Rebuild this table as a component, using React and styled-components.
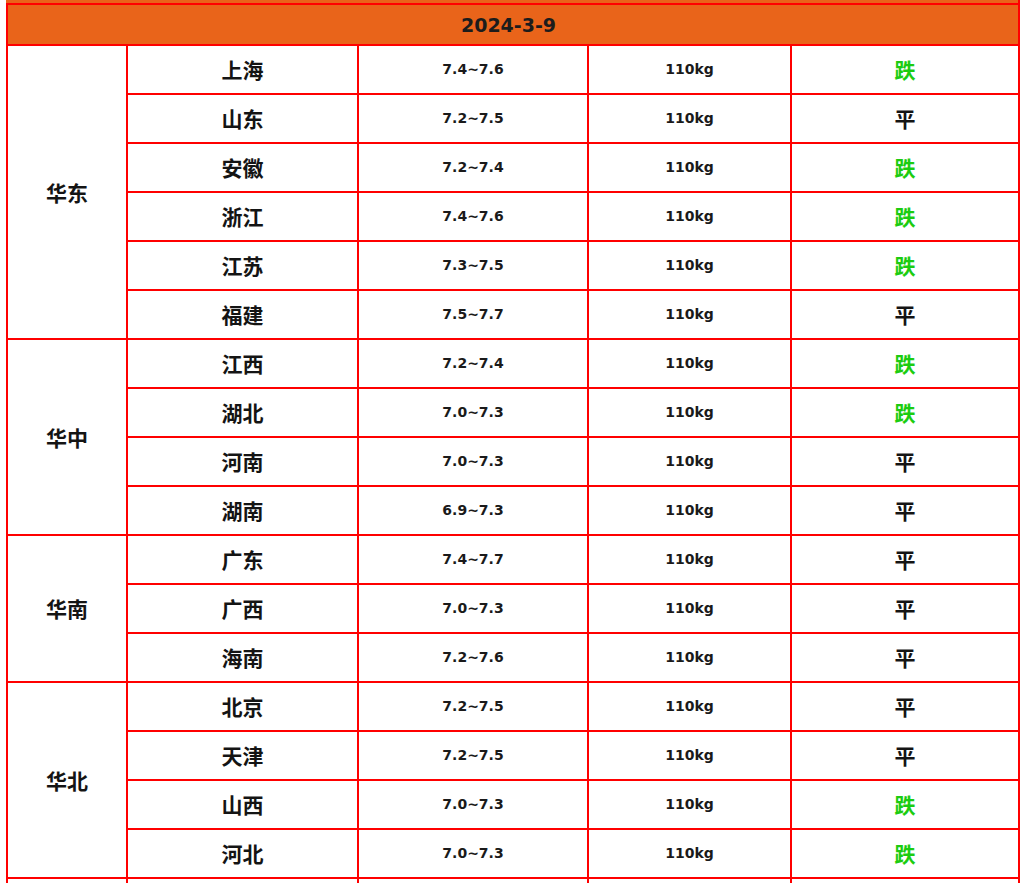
import React from "react";
import styled, { createGlobalStyle } from "styled-components";

const Global = createGlobalStyle`
  html, body { margin: 0; padding: 0; background: #fff; overflow: hidden; }
  body { font-family: "Noto Sans CJK SC", "DejaVu Sans", sans-serif; }
`;

const Page = styled.div`
  width: 1029px;
  height: 883px;
  overflow: hidden;
  background: #fff;
`;

const TopEdge = styled.div`
  width: 1012px;
  height: 3px;
  margin-left: 6px;
  background: #e9641a;
  border-right: 2px solid #ff0000;
`;

const Table = styled.div`
  margin-left: 6px;
  width: 1014px;
  box-sizing: border-box;
  display: grid;
  grid-template-columns: 118px 229px 228px 201px 226px;
  grid-template-rows: 39px;
  grid-auto-rows: 47px;
  gap: 2px;
  padding: 2px;
  background: #ff0000;
`;

const Header = styled.div`
  grid-column: 1 / -1;
  background: #e9641a;
  display: flex;
  align-items: center;
  justify-content: center;
  padding-right: 9px;
  font-family: "DejaVu Sans", sans-serif;
  font-weight: bold;
  font-size: 19px;
  color: #1c1c1c;
`;

const Cell = styled.div`
  background: #fff;
  display: flex;
  align-items: center;
  justify-content: center;
  padding-bottom: 1px;
  color: #141414;
`;

const RegionCell = styled(Cell)`
  grid-row: span ${(p) => p.$span};
  font-weight: bold;
  font-size: 21px;
  font-family: "Noto Sans CJK SC", sans-serif;
`;

const NameCell = styled(Cell)`
  font-weight: bold;
  font-size: 21px;
  font-family: "Noto Sans CJK SC", sans-serif;
`;

const NumCell = styled(Cell)`
  font-family: "DejaVu Sans", sans-serif;
  font-weight: bold;
  font-size: 14px;
  color: #1a1a1a;
`;

const TrendCell = styled(Cell)`
  font-weight: bold;
  font-size: 21px;
  font-family: "Noto Sans CJK SC", sans-serif;
  color: ${(p) => (p.$down ? "#1ccc10" : "#141414")};
`;

const data = [
  {
    region: "华东",
    rows: [
      ["上海", "7.4~7.6", "跌"],
      ["山东", "7.2~7.5", "平"],
      ["安徽", "7.2~7.4", "跌"],
      ["浙江", "7.4~7.6", "跌"],
      ["江苏", "7.3~7.5", "跌"],
      ["福建", "7.5~7.7", "平"],
    ],
  },
  {
    region: "华中",
    rows: [
      ["江西", "7.2~7.4", "跌"],
      ["湖北", "7.0~7.3", "跌"],
      ["河南", "7.0~7.3", "平"],
      ["湖南", "6.9~7.3", "平"],
    ],
  },
  {
    region: "华南",
    rows: [
      ["广东", "7.4~7.7", "平"],
      ["广西", "7.0~7.3", "平"],
      ["海南", "7.2~7.6", "平"],
    ],
  },
  {
    region: "华北",
    rows: [
      ["北京", "7.2~7.5", "平"],
      ["天津", "7.2~7.5", "平"],
      ["山西", "7.0~7.3", "跌"],
      ["河北", "7.0~7.3", "跌"],
    ],
  },
];

export default function App() {
  return (
    <Page>
      <Global />
      <TopEdge />
      <Table>
        <Header>2024-3-9</Header>
        {data.map((g) =>
          g.rows.map((r, i) => (
            <React.Fragment key={g.region + r[0]}>
              {i === 0 && <RegionCell $span={g.rows.length}>{g.region}</RegionCell>}
              <NameCell>{r[0]}</NameCell>
              <NumCell>{r[1]}</NumCell>
              <NumCell>110kg</NumCell>
              <TrendCell $down={r[2] === "跌"}>{r[2]}</TrendCell>
            </React.Fragment>
          ))
        )}
        {[0, 1, 2, 3, 4].map((k) => (
          <Cell key={"tail" + k} />
        ))}
      </Table>
    </Page>
  );
}
